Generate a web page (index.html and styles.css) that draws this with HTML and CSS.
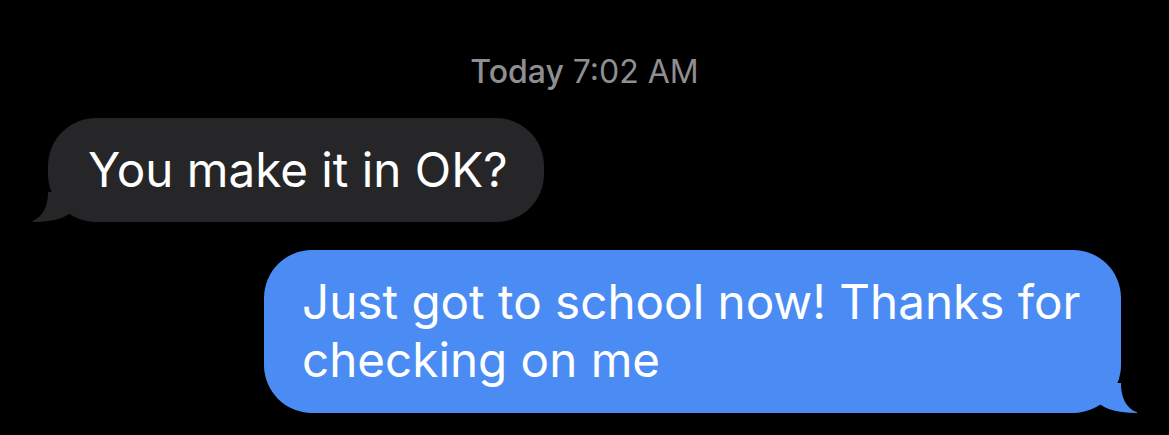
FILE: index.html
```html
<!DOCTYPE html>
<html lang="en">
<head>
  <meta charset="UTF-8" />
  <meta name="viewport" content="width=device-width, initial-scale=1.0" />
  <title>Messages</title>
  <link rel="stylesheet" href="styles.css">
</head>
<body>

  <main class="thread">
    <p class="timestamp"><span class="day">Today</span> 7:02 AM</p>

    <div class="row row-in">
      <div class="bubble bubble-in">You make it in OK?</div>
    </div>

    <div class="row row-out">
      <div class="bubble bubble-out">Just got to school now! Thanks for checking on me</div>
    </div>
  </main>

</body>
</html>
```

FILE: styles.css
```css
/* Reset */
* {
  box-sizing: border-box;
  margin: 0;
  padding: 0;
}

html, body {
  background: #000;
  color: #fff;
  font-family: Inter, "Noto Sans", sans-serif;
  height: 100%;
  overflow: hidden;
}

.thread {
  display: flex;
  flex-direction: column;
  padding: 52px 48px 0 48px;
}

/* Time header */
.timestamp {
  text-align: center;
  color: #8e8e93;
  font-size: 32px;
  line-height: 40px;
  margin-bottom: 26px;
}

.timestamp .day {
  font-weight: 500;
}

/* Rows */
.row {
  display: flex;
}

.row-in {
  justify-content: flex-start;
}

.row-out {
  justify-content: flex-end;
  margin-top: 28px;
}

/* Bubbles */
.bubble {
  position: relative;
  font-size: 47.6px;
  line-height: 58px;
  border-radius: 48px;
}

.bubble-in {
  background: #262628;
  padding: 23px 36px 23px 40px;
}

.bubble-out {
  background: #4a8cf4;
  max-width: 857px;
  padding: 23px 28px 24px 38px;
}

/* Tails */
.bubble-in::before,
.bubble-in::after,
.bubble-out::before,
.bubble-out::after {
  content: "";
  position: absolute;
  bottom: 0;
  height: 30px;
}

.bubble-in::before {
  left: -15px;
  width: 40px;
  background: #262628;
  border-bottom-right-radius: 40px 14px;
}

.bubble-in::after {
  left: -36px;
  width: 36px;
  background: #000;
  border-bottom-right-radius: 21px 28px;
}

.bubble-out::before {
  right: -16px;
  width: 40px;
  background: #4a8cf4;
  border-bottom-left-radius: 40px 14px;
}

.bubble-out::after {
  right: -36px;
  width: 36px;
  background: #000;
  border-bottom-left-radius: 20px 28px;
}
```
